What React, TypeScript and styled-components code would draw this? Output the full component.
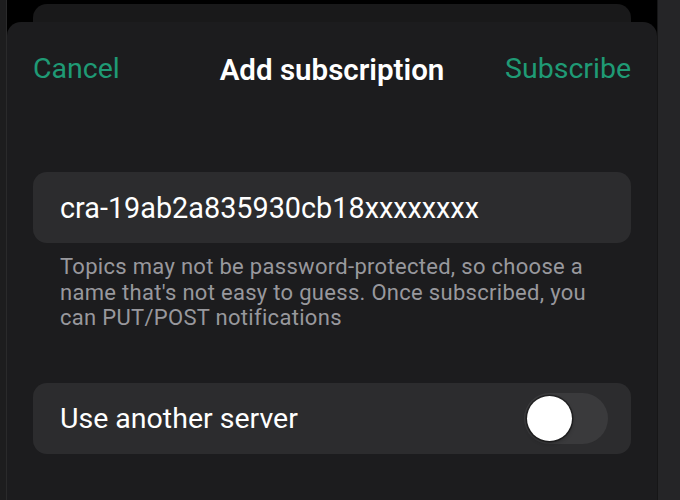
import React, { useState } from "react";
import styled, { createGlobalStyle } from "styled-components";

const GlobalStyle = createGlobalStyle`
  html, body {
    margin: 0;
    padding: 0;
    background: #000;
    height: 100%;
    overflow: hidden;
  }
  #root {
    height: 100%;
  }
  * { box-sizing: border-box; }
`;

const Screen = styled.div`
  display: flex;
  height: 500px;
  width: 680px;
  font-family: Roboto, "Liberation Sans", sans-serif;
  -webkit-font-smoothing: antialiased;
`;

const EdgeStrip = styled.div<{ $w: number; $bg: string; $line: string; $side: "left" | "right" }>`
  flex: 0 0 ${(p) => p.$w}px;
  background: ${(p) => p.$bg};
  ${(p) => (p.$side === "left" ? "border-right" : "border-left")}: 1px solid ${(p) => p.$line};
`;

const Stage = styled.div`
  flex: 1;
  display: flex;
  flex-direction: column;
  background: #000;
  padding-top: 4px;
`;

const BackCard = styled.div`
  flex: 0 0 18px;
  margin: 0 26px;
  background: #19191a;
  border-radius: 14px 14px 0 0;
`;

const Sheet = styled.div`
  flex: 1;
  display: flex;
  flex-direction: column;
  background: #1c1c1e;
  border-radius: 14px 14px 0 0;
  padding: 23px 26px 0;
`;

const Header = styled.div`
  display: grid;
  grid-template-columns: 1fr auto 1fr;
  align-items: center;
  height: 46px;
`;

const NavButton = styled.button<{ $align: "start" | "end" }>`
  justify-self: ${(p) => p.$align};
  background: none;
  border: none;
  padding: 0;
  font-family: inherit;
  font-size: 28.5px;
  color: #1f9a75;
  cursor: pointer;
`;

const Title = styled.h1`
  margin: 0;
  font-size: 29.5px;
  font-weight: 600;
  color: #fff;
  transform: translateY(2px);
`;

const Form = styled.div`
  display: flex;
  flex-direction: column;
  margin-top: 81px;
`;

const Field = styled.div`
  height: 71px;
  border-radius: 14px;
  background: #2c2c2e;
  display: flex;
  align-items: center;
  padding: 0 27px;
`;

const TopicInput = styled.input`
  flex: 1;
  background: transparent;
  border: none;
  outline: none;
  padding: 0;
  font-family: inherit;
  font-size: 28.8px;
  color: #fff;
`;

const Helper = styled.p`
  margin: 11px 0 0;
  padding: 0 27px;
  font-size: 22px;
  letter-spacing: 0.3px;
  line-height: 25.5px;
  color: #98989d;
`;

const Row = styled.div`
  margin-top: 52px;
  height: 71px;
  border-radius: 14px;
  background: #2c2c2e;
  display: flex;
  align-items: center;
  justify-content: space-between;
  padding: 0 23px 0 27px;
`;

const RowLabel = styled.span`
  font-size: 28.5px;
  color: #fff;
`;

const Switch = styled.button<{ $on: boolean }>`
  width: 84px;
  height: 51px;
  border-radius: 26px;
  border: none;
  padding: 3px;
  display: flex;
  justify-content: ${(p) => (p.$on ? "flex-end" : "flex-start")};
  align-items: center;
  background: ${(p) => (p.$on ? "#1f9a75" : "#3a3a3c")};
  cursor: pointer;
`;

const Knob = styled.span`
  width: 45px;
  height: 45px;
  border-radius: 50%;
  background: #fff;
  box-shadow: 0 0 0 1.5px rgba(0, 0, 0, 0.4), 0 2px 4px rgba(0, 0, 0, 0.3);
`;

export default function App() {
  const [on, setOn] = useState(false);
  return (
    <>
      <GlobalStyle />
      <Screen>
        <EdgeStrip $w={7} $bg="#1d1d1e" $line="#2a2a2b" $side="left" />
        <Stage>
          <BackCard />
          <Sheet>
            <Header>
              <NavButton $align="start">Cancel</NavButton>
              <Title>Add subscription</Title>
              <NavButton $align="end">Subscribe</NavButton>
            </Header>
            <Form>
              <Field>
                <TopicInput defaultValue="cra-19ab2a835930cb18xxxxxxxx" />
              </Field>
              <Helper>
                Topics may not be password-protected, so choose a name that's not easy to guess. Once
                subscribed, you can PUT/POST notifications
              </Helper>
              <Row>
                <RowLabel>Use another server</RowLabel>
                <Switch $on={on} onClick={() => setOn(!on)} aria-label="Use another server">
                  <Knob />
                </Switch>
              </Row>
            </Form>
          </Sheet>
        </Stage>
        <EdgeStrip $w={23} $bg="#252527" $line="#161617" $side="right" />
      </Screen>
    </>
  );
}
